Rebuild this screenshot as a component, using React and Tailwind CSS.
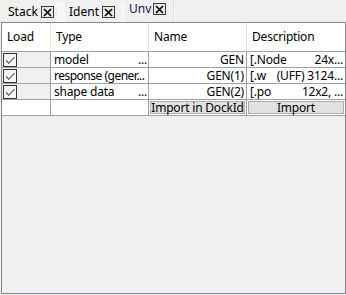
import React from "react";

function CloseBox() {
  return (
    <span className="w-[13px] h-[12px] border border-[#3c3c3c] bg-[#e8e8e8] flex items-center justify-center shrink-0">
      <svg width="9" height="9" viewBox="0 0 9 9">
        <path d="M1 1L8 8M8 1L1 8" stroke="#000" strokeWidth="1.6" />
      </svg>
    </span>
  );
}

function Check() {
  return (
    <span className="w-[14px] h-[14px] border border-[#333] bg-[#f6f6f6] flex items-center justify-center">
      <svg width="12" height="12" viewBox="0 0 12 12">
        <path d="M2 6.5L4.8 9.2L10.5 3" stroke="#555" strokeWidth="1.1" fill="none" />
      </svg>
    </span>
  );
}

const rows = [
  { type: "model", dots: true, name: "GEN", d1: "[.Node", d2: "24x..." },
  { type: "response (gener...", dots: false, name: "GEN(1)", d1: "[.w", d2: "(UFF) 3124..." },
  { type: "shape data", dots: true, name: "GEN(2)", d1: "[.po", d2: "12x2, ..." },
];

export default function App() {
  return (
    <div className="w-[346px] h-[295px] bg-[#f0f0f0] text-[12px] text-black font-['Segoe_UI','Noto_Sans','Open_Sans',sans-serif] flex flex-col overflow-hidden">
      <div className="h-[22px] flex items-end bg-[#f0f0f0]">
        <div className="h-[20px] w-[58px] flex items-center pl-[8px] gap-[3px] bg-[#f0f0f0] border-r border-[#fafafa]">
          <span className="leading-none">Stack</span>
          <CloseBox />
        </div>
        <div className="h-[20px] w-[7px] bg-[#f7f7f7]" />
        <div className="h-[20px] w-[56px] flex items-center pl-[4px] gap-[3px] bg-[#f0f0f0]">
          <span className="leading-none">Ident</span>
          <CloseBox />
        </div>
        <div className="h-[20px] w-[4px] bg-[#f7f7f7]" />
        <div className="h-[22px] w-[49px] flex items-start pt-[3px] pl-[4px] gap-[2px] bg-[#f0f0f0] border-r border-[#dcdcdc]">
          <span className="leading-none text-[#1a1450]">Unv</span>
          <CloseBox />
        </div>
        <div className="flex-1 h-[20px] bg-[#f0f0f0] border-l border-[#fafafa]" />
      </div>
      <div className="ml-[1px] w-[345px] h-[272px] border border-[#828790] bg-[#f0f0f0] flex flex-col tracking-[-0.2px]">
        <div className="flex h-[29px] bg-white border-b border-[#a0a0a0]">
          <div className="w-[49px] border-r border-[#e5e5e5] flex items-center pl-[5px]">Load</div>
          <div className="w-[98px] border-r border-[#e5e5e5] flex items-center pl-[5px]">Type</div>
          <div className="w-[98px] border-r border-[#e5e5e5] flex items-center pl-[5px]">Name</div>
          <div className="flex-1 flex items-center pl-[5px]">Description</div>
        </div>
        {rows.map((r, i) => (
          <div key={i} className="flex h-[16px] border-b border-[#a0a0a0]">
            <div className="w-[49px] border-r border-[#a0a0a0] bg-[#f0f0f0] flex items-center pl-[1px]">
              <Check />
            </div>
            <div className="w-[98px] border-r border-[#a0a0a0] bg-white flex items-center justify-between pl-[3px] pr-[1px] leading-none whitespace-nowrap overflow-hidden">
              <span className={r.dots ? "" : "tracking-[-0.5px]"}>{r.type}</span>
              {r.dots && <span>...</span>}
            </div>
            <div className="w-[98px] border-r border-[#a0a0a0] bg-white flex items-center justify-end pr-[2px] leading-none">
              {r.name}
            </div>
            <div className="flex-1 bg-white flex items-center justify-between pl-[3px] pr-[2px] leading-none whitespace-nowrap">
              <span>{r.d1}</span>
              <span>{r.d2}</span>
            </div>
          </div>
        ))}
        <div className="flex h-[16px] border-b border-[#a0a0a0]">
          <div className="w-[49px] border-r border-[#a0a0a0] bg-white" />
          <div className="w-[98px] border-r border-[#a0a0a0] bg-white" />
          <div className="w-[98px] border-r border-[#a0a0a0] bg-white p-[1px] flex">
            <div className="flex-1 bg-[#e1e1e1] border border-[#adadad] flex items-center justify-center leading-none whitespace-nowrap">
              Import in DockId
            </div>
          </div>
          <div className="flex-1 bg-white p-[1px] flex">
            <div className="flex-1 bg-[#e1e1e1] border border-[#adadad] flex items-center justify-center leading-none whitespace-nowrap">
              Import
            </div>
          </div>
        </div>
      </div>
    </div>
  );
}
